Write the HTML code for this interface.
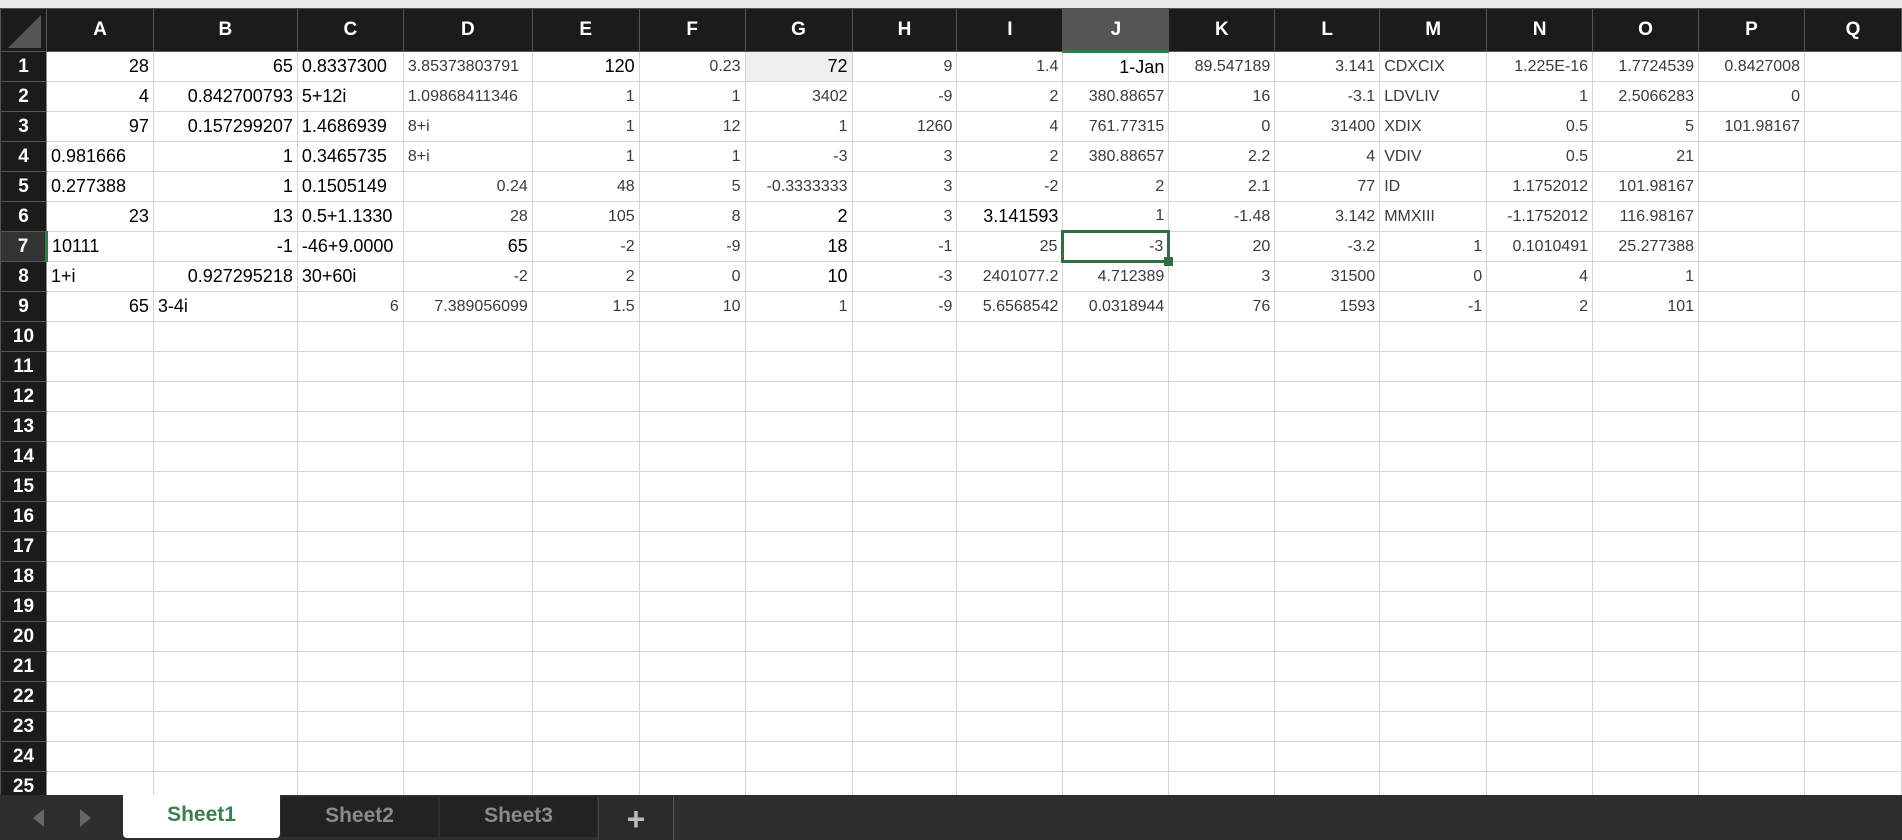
<!DOCTYPE html>
<html><head><meta charset="utf-8"><style>
html,body{margin:0;padding:0;background:#fff;width:1902px;height:840px;overflow:hidden;position:relative;font-family:"Liberation Sans",sans-serif}
.top{position:absolute;left:0;top:0;width:1902px;height:8px;background:#e8e8e8;border-bottom:1px solid #999}
table{position:absolute;left:0;top:8px;border-collapse:collapse;table-layout:fixed}
td{border:1px solid #d6d6d6;height:30px;padding:0 4px;white-space:nowrap;overflow:hidden;font-size:16px;color:#3a3a3a;text-align:right;box-sizing:border-box}
tr.h td{background:#1b1b1b;color:#fff;font-weight:bold;font-size:19px;text-align:center;height:43px;border:1px solid #555;font-family:"Liberation Sans Narrow","Liberation Sans",sans-serif}
td.rh{background:#1b1b1b;color:#fff;font-weight:bold;font-size:19px;text-align:center;padding:0;border:1px solid #555;border-right:1px solid #888;font-family:"Liberation Sans Narrow","Liberation Sans",sans-serif}
td.b{color:#000;font-size:18px}
td.l{text-align:left}
.tabs{position:absolute;left:0;top:795px;width:1902px;height:45px;background:#2e2e2e}
</style></head><body>
<div class="top"></div>
<table>
<colgroup><col style="width:46px"><col style="width:107px"><col style="width:144px"><col style="width:106px"><col style="width:129px"><col style="width:107px"><col style="width:106px"><col style="width:107px"><col style="width:105px"><col style="width:106px"><col style="width:106px"><col style="width:106px"><col style="width:105px"><col style="width:107px"><col style="width:106px"><col style="width:106px"><col style="width:106px"><col style="width:97px"></colgroup>
<tr class="h"><td style="background:#1b1b1b;position:relative"><svg width="40" height="38" style="position:absolute;left:4px;top:3px"><polygon points="36,3 36,36 3,36" fill="#555"/></svg></td><td>A</td><td>B</td><td>C</td><td>D</td><td>E</td><td>F</td><td>G</td><td>H</td><td>I</td><td style="background:#555;border-bottom:3px solid #2f7a45">J</td><td>K</td><td>L</td><td>M</td><td>N</td><td>O</td><td>P</td><td>Q</td></tr>
<tr><td class="rh">1</td><td class="b">28</td><td class="b">65</td><td class="b l">0.8337300</td><td class="l">3.85373803791</td><td class="b">120</td><td>0.23</td><td class="b" style="background:#f0f0f0">72</td><td>9</td><td>1.4</td><td class="b">1-Jan</td><td>89.547189</td><td>3.141</td><td class="l">CDXCIX</td><td>1.225E-16</td><td>1.7724539</td><td>0.8427008</td><td></td></tr>
<tr><td class="rh">2</td><td class="b">4</td><td class="b">0.842700793</td><td class="b l">5+12i</td><td class="l">1.09868411346</td><td>1</td><td>1</td><td>3402</td><td>-9</td><td>2</td><td>380.88657</td><td>16</td><td>-3.1</td><td class="l">LDVLIV</td><td>1</td><td>2.5066283</td><td>0</td><td></td></tr>
<tr><td class="rh">3</td><td class="b">97</td><td class="b">0.157299207</td><td class="b l">1.4686939</td><td class="l">8+i</td><td>1</td><td>12</td><td>1</td><td>1260</td><td>4</td><td>761.77315</td><td>0</td><td>31400</td><td class="l">XDIX</td><td>0.5</td><td>5</td><td>101.98167</td><td></td></tr>
<tr><td class="rh">4</td><td class="b l">0.981666</td><td class="b">1</td><td class="b l">0.3465735</td><td class="l">8+i</td><td>1</td><td>1</td><td>-3</td><td>3</td><td>2</td><td>380.88657</td><td>2.2</td><td>4</td><td class="l">VDIV</td><td>0.5</td><td>21</td><td></td><td></td></tr>
<tr><td class="rh">5</td><td class="b l">0.277388</td><td class="b">1</td><td class="b l">0.1505149</td><td>0.24</td><td>48</td><td>5</td><td>-0.3333333</td><td>3</td><td>-2</td><td>2</td><td>2.1</td><td>77</td><td class="l">ID</td><td>1.1752012</td><td>101.98167</td><td></td><td></td></tr>
<tr><td class="rh">6</td><td class="b">23</td><td class="b">13</td><td class="b l">0.5+1.1330</td><td>28</td><td>105</td><td>8</td><td class="b">2</td><td>3</td><td class="b">3.141593</td><td>1</td><td>-1.48</td><td>3.142</td><td class="l">MMXIII</td><td>-1.1752012</td><td>116.98167</td><td></td><td></td></tr>
<tr><td class="rh" style="background:#333;border-right:3px solid #2f7a45">7</td><td class="b l">10111</td><td class="b">-1</td><td class="b l">-46+9.0000</td><td class="b">65</td><td>-2</td><td>-9</td><td class="b">18</td><td>-1</td><td>25</td><td style="border:3px solid #2f6e40;position:relative;overflow:visible">-3<div style="position:absolute;right:-6px;bottom:-6px;width:9px;height:9px;background:#2f6e40"></div></td><td>20</td><td>-3.2</td><td>1</td><td>0.1010491</td><td>25.277388</td><td></td><td></td></tr>
<tr><td class="rh">8</td><td class="b l">1+i</td><td class="b">0.927295218</td><td class="b l">30+60i</td><td>-2</td><td>2</td><td>0</td><td class="b">10</td><td>-3</td><td>2401077.2</td><td>4.712389</td><td>3</td><td>31500</td><td>0</td><td>4</td><td>1</td><td></td><td></td></tr>
<tr><td class="rh">9</td><td class="b">65</td><td class="b l">3-4i</td><td>6</td><td>7.389056099</td><td>1.5</td><td>10</td><td>1</td><td>-9</td><td>5.6568542</td><td>0.0318944</td><td>76</td><td>1593</td><td>-1</td><td>2</td><td>101</td><td></td><td></td></tr>
<tr><td class="rh">10</td><td></td><td></td><td></td><td></td><td></td><td></td><td></td><td></td><td></td><td></td><td></td><td></td><td></td><td></td><td></td><td></td><td></td></tr>
<tr><td class="rh">11</td><td></td><td></td><td></td><td></td><td></td><td></td><td></td><td></td><td></td><td></td><td></td><td></td><td></td><td></td><td></td><td></td><td></td></tr>
<tr><td class="rh">12</td><td></td><td></td><td></td><td></td><td></td><td></td><td></td><td></td><td></td><td></td><td></td><td></td><td></td><td></td><td></td><td></td><td></td></tr>
<tr><td class="rh">13</td><td></td><td></td><td></td><td></td><td></td><td></td><td></td><td></td><td></td><td></td><td></td><td></td><td></td><td></td><td></td><td></td><td></td></tr>
<tr><td class="rh">14</td><td></td><td></td><td></td><td></td><td></td><td></td><td></td><td></td><td></td><td></td><td></td><td></td><td></td><td></td><td></td><td></td><td></td></tr>
<tr><td class="rh">15</td><td></td><td></td><td></td><td></td><td></td><td></td><td></td><td></td><td></td><td></td><td></td><td></td><td></td><td></td><td></td><td></td><td></td></tr>
<tr><td class="rh">16</td><td></td><td></td><td></td><td></td><td></td><td></td><td></td><td></td><td></td><td></td><td></td><td></td><td></td><td></td><td></td><td></td><td></td></tr>
<tr><td class="rh">17</td><td></td><td></td><td></td><td></td><td></td><td></td><td></td><td></td><td></td><td></td><td></td><td></td><td></td><td></td><td></td><td></td><td></td></tr>
<tr><td class="rh">18</td><td></td><td></td><td></td><td></td><td></td><td></td><td></td><td></td><td></td><td></td><td></td><td></td><td></td><td></td><td></td><td></td><td></td></tr>
<tr><td class="rh">19</td><td></td><td></td><td></td><td></td><td></td><td></td><td></td><td></td><td></td><td></td><td></td><td></td><td></td><td></td><td></td><td></td><td></td></tr>
<tr><td class="rh">20</td><td></td><td></td><td></td><td></td><td></td><td></td><td></td><td></td><td></td><td></td><td></td><td></td><td></td><td></td><td></td><td></td><td></td></tr>
<tr><td class="rh">21</td><td></td><td></td><td></td><td></td><td></td><td></td><td></td><td></td><td></td><td></td><td></td><td></td><td></td><td></td><td></td><td></td><td></td></tr>
<tr><td class="rh">22</td><td></td><td></td><td></td><td></td><td></td><td></td><td></td><td></td><td></td><td></td><td></td><td></td><td></td><td></td><td></td><td></td><td></td></tr>
<tr><td class="rh">23</td><td></td><td></td><td></td><td></td><td></td><td></td><td></td><td></td><td></td><td></td><td></td><td></td><td></td><td></td><td></td><td></td><td></td></tr>
<tr><td class="rh">24</td><td></td><td></td><td></td><td></td><td></td><td></td><td></td><td></td><td></td><td></td><td></td><td></td><td></td><td></td><td></td><td></td><td></td></tr>
<tr><td class="rh">25</td><td></td><td></td><td></td><td></td><td></td><td></td><td></td><td></td><td></td><td></td><td></td><td></td><td></td><td></td><td></td><td></td><td></td></tr>
</table>
<div class="tabs">
<svg width="123" height="45" style="position:absolute;left:0;top:0"><polygon points="44,14 44,32 33,23" fill="#666"/><polygon points="80,14 80,32 91,23" fill="#666"/></svg>
<div style="position:absolute;left:123px;top:0;width:157px;height:43px;background:#fff;border-radius:0 0 4px 4px;color:#3b7f4e;font-weight:bold;font-size:21px;text-align:center;line-height:40px">Sheet1</div>
<div style="position:absolute;left:281px;top:2px;width:157px;height:40px;background:#222;color:#8a8a8a;font-weight:bold;font-size:21px;text-align:center;line-height:38px">Sheet2</div>
<div style="position:absolute;left:440px;top:2px;width:157px;height:40px;background:#222;color:#8a8a8a;font-weight:bold;font-size:21px;text-align:center;line-height:38px">Sheet3</div>
<div style="position:absolute;left:598px;top:2px;width:74px;height:43px;background:#2a2a2a;border-left:1px solid #444;border-right:1px solid #555;color:#bbb;font-size:32px;font-weight:bold;text-align:center;line-height:44px">+</div>
</div>
</body></html>
